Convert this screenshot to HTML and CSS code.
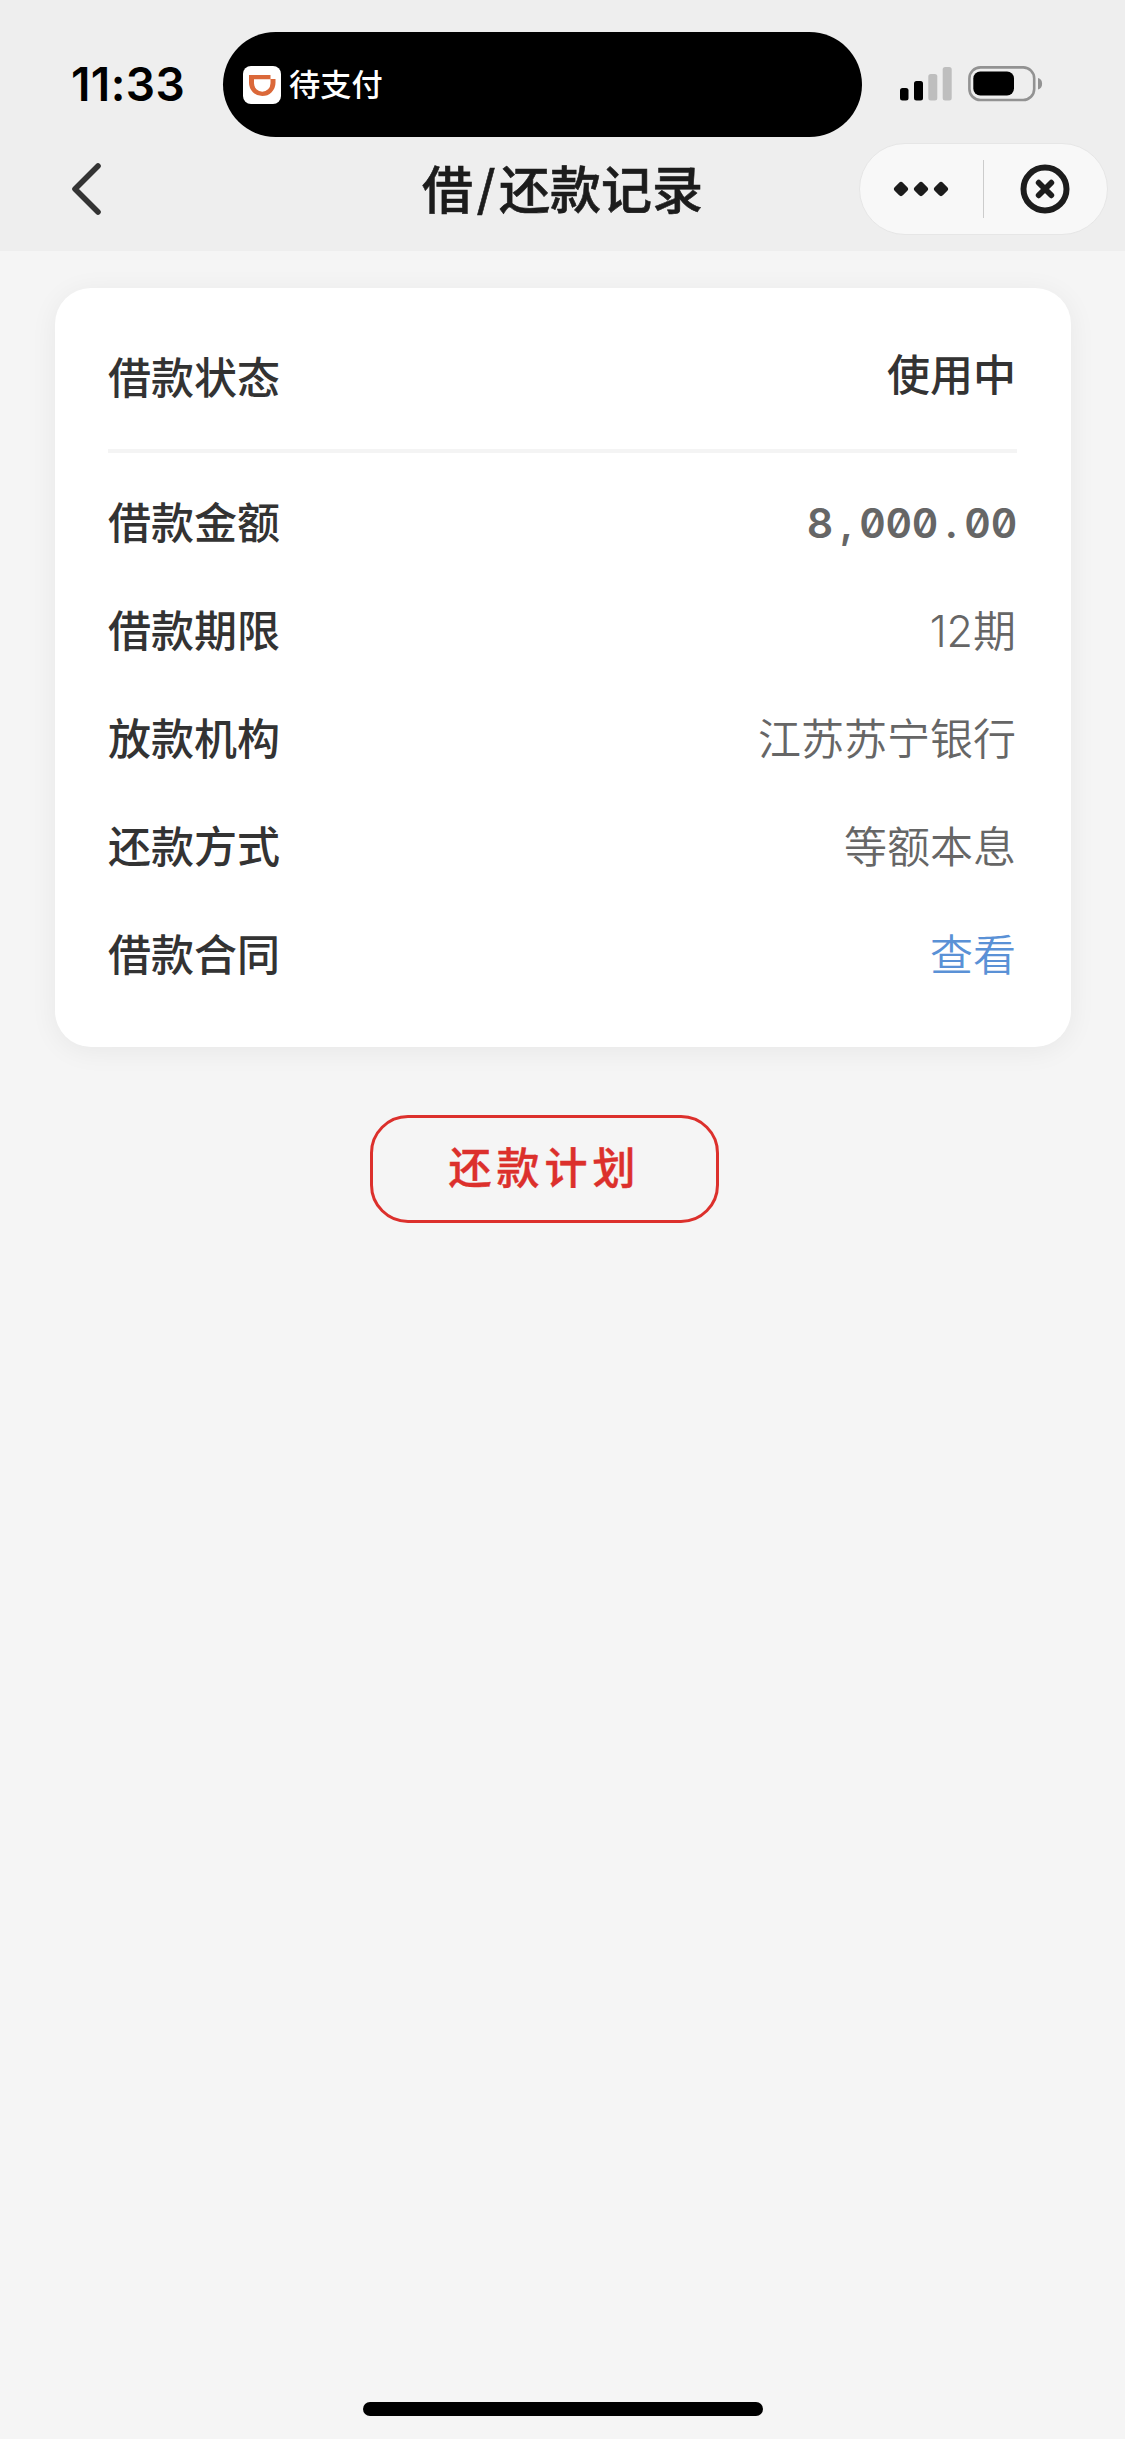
FILE: index.html
```html
<!DOCTYPE html>
<html lang="zh-CN">
<head>
<meta charset="utf-8">
<title>借/还款记录</title>
<link rel="stylesheet" href="styles.css">
</head>
<body>
<header class="top">
  <div class="status">
    <span class="time">11:33</span>
    <div class="island">
      <svg class="app-icon" viewBox="0 0 38 38">
        <rect width="38" height="38" rx="8" fill="#fff"/>
        <path d="M6 9H27.500V13H32.500V16.800A13.250 13.200 0 0 1 6 16.800ZM11 13.300V17.300A8.250 8.500 0 0 0 27.500 17.300V13.300Z" fill="#db6839" fill-rule="evenodd"/>
      </svg>
      <span class="island-text">待支付</span>
    </div>
    <svg class="indicators" viewBox="0 0 144 36">
      <rect x="0" y="22" width="8.500" height="12.500" rx="2.500"/>
      <rect x="14" y="15" width="9" height="19.500" rx="2.500"/>
      <rect x="28.300" y="8" width="9" height="26.500" rx="2.500" fill="#bebebe"/>
      <rect x="42.700" y="1" width="9" height="33.500" rx="2.500" fill="#bebebe"/>
      <rect x="69.400" y="1.400" width="64.800" height="32.600" rx="11" fill="none" stroke="#929292" stroke-width="2.600"/>
      <rect x="73.300" y="5.500" width="40.700" height="24" rx="7"/>
      <path d="M138 12C143.500 13 143.500 22.500 138 23.500Z" fill="#929292"/>
    </svg>
  </div>
  <nav class="nav">
    <svg class="back" viewBox="0 0 32 54"><path d="M28 4 5 27 28 50" fill="none" stroke="#333" stroke-width="5.600" stroke-linecap="round" stroke-linejoin="round"/></svg>
    <h1 class="title">借<span class="slash">/</span>还款记录</h1>
    <div class="capsule">
      <svg class="dots" viewBox="0 0 56 16">
        <g fill="#1c1c1c" stroke="#1c1c1c" stroke-width="6" stroke-linejoin="round"><path d="M8 4 12 8 8 12 4 8ZM28 4 32 8 28 12 24 8ZM48 4 52 8 48 12 44 8Z"/></g>
      </svg>
      <span class="capsule-line"></span>
      <svg class="close" viewBox="0 0 50 50">
        <g fill="none" stroke="#1c1c1c" stroke-linecap="round"><circle cx="25" cy="25" r="21.500" stroke-width="6"/><path d="M18.700 18.700 31.300 31.300M31.300 18.700 18.700 31.300" stroke-width="5.800"/></g>
      </svg>
    </div>
  </nav>
</header>
<main class="content">
  <section class="card">
    <div class="row row-status"><span class="label">借款状态</span><span class="value value-strong">使用中</span></div>
    <div class="row"><span class="label">借款金额</span><span class="value amount">8<span class="mark">,</span>000<span class="mark">.</span>00</span></div>
    <div class="row"><span class="label">借款期限</span><span class="value">12期</span></div>
    <div class="row"><span class="label">放款机构</span><span class="value">江苏苏宁银行</span></div>
    <div class="row"><span class="label">还款方式</span><span class="value">等额本息</span></div>
    <div class="row"><span class="label">借款合同</span><a class="value link">查看</a></div>
  </section>
  <button class="plan">还款计划</button>
</main>
<footer class="home"><span class="home-bar"></span></footer>
</body>
</html>
```
FILE: styles.css
```css
* { box-sizing: border-box; }
body {
  margin: 0;
  min-height: 2439px;
  display: flex;
  flex-direction: column;
  background: #f5f5f5;
  color: #333;
  font-family: "Inter", "Noto Sans CJK SC", sans-serif;
  font-size: 43px;
}
svg { display: block; flex: none; }
.top { height: 251px; background: #eee; }
.status {
  height: 137px;
  padding-top: 32px;
  display: flex;
}
.time {
  width: 223px;
  padding-left: 71px;
  font-size: 46px;
  letter-spacing: .4px;
  line-height: 104px;
  font-weight: 600;
  color: #000;
}
.island {
  width: 639px;
  height: 105px;
  padding: 0 0 2px 20px;
  border-radius: 53px;
  background: #000;
  color: #fff;
  display: flex;
  align-items: center;
}
.app-icon { width: 38px; height: 38px; margin-top: 3px; }
.island-text {
  margin: 3px 0 0 8px;
  font-size: 31.200px;
  line-height: 46px;
  font-weight: 500;
}
.indicators { width: 144px; height: 36px; margin: 34px 0 0 38px; }
.nav {
  height: 114px;
  padding: 6px 17px 0 70px;
  display: flex;
  align-items: flex-start;
}
.back { width: 32px; height: 54px; margin-top: 19px; }
.title {
  margin: 0 0 0 320px;
  width: 437px;
  font-family: "Noto Sans CJK SC", sans-serif;
  font-size: 51px;
  line-height: 88px;
  font-weight: 500;
  color: #1c1c1c;
  -webkit-text-stroke: .6px #1c1c1c;
}
.slash {
  display: inline-block;
  width: 26px;
  font-family: "Inter", sans-serif;
  font-size: 54px;
  font-weight: 400;
  line-height: 60px;
  text-align: center;
}
.capsule {
  width: 249px;
  height: 92px;
  border: 1px solid #e6e6e6;
  border-radius: 46px;
  background: #f8f8f8;
  display: flex;
  align-items: center;
}
.dots { width: 56px; height: 16px; margin-left: 33px; }
.capsule-line { width: 1px; height: 58px; margin-left: 34px; background: #ccc; }
.close { width: 50px; height: 50px; margin-left: 36px; }
.content { flex: 1; padding: 37px 54.500px 0; }
.card {
  height: 759px;
  padding: 0 53.500px;
  border-radius: 36px;
  background: #fff;
  box-shadow: 0 4px 28px rgba(0, 0, 0, .06);
}
.row {
  height: 108px;
  display: flex;
  justify-content: space-between;
  align-items: center;
  line-height: 64px;
}
.row-status {
  height: 165px;
  margin-bottom: 16px;
  padding-top: 18px;
  border-bottom: 4px solid #f4f4f4;
}
.label { font-weight: 500; }
.value { padding-right: 1px; font-weight: 350; color: #666; }
.value-strong { margin-top: -6px; font-weight: 500; color: #333; }
.amount {
  padding-right: 0;
  font-size: 41px;
  font-weight: 600;
  letter-spacing: -.2px;
  font-variant-numeric: tabular-nums slashed-zero;
}
.mark { display: inline-block; width: 26.200px; text-align: center; }
.link { color: #5a91d6; }
.plan {
  display: block;
  width: 349px;
  height: 108px;
  margin: 68px 0 0 315.500px;
  padding: 0 0 8px;
  border: 3px solid #dc302c;
  border-radius: 38px;
  background: transparent;
  color: #dc302c;
  font: 500 43px "Noto Sans CJK SC", sans-serif;
  letter-spacing: 5px;
  -webkit-text-stroke: .4px #dc302c;
}
.home { height: 37px; display: flex; justify-content: center; }
.home-bar { width: 400px; height: 14px; border-radius: 7px; background: #000; }
```
